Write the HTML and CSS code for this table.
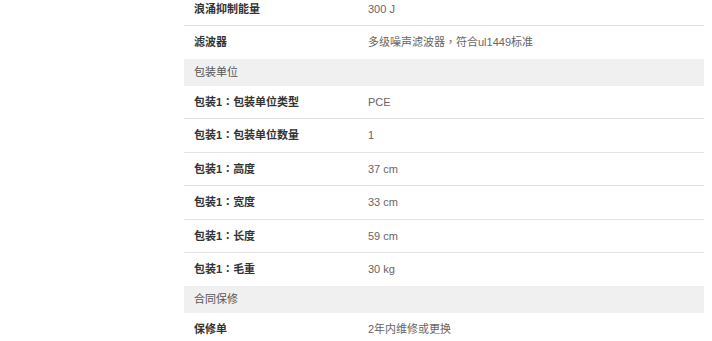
FILE: index.html
```html
<!DOCTYPE html>
<html lang="zh-CN">
<head>
<meta charset="utf-8">
<link rel="stylesheet" href="styles.css">
</head>
<body>
<div class="specs">
  <div class="row"><div class="label">浪涌抑制能量</div><div class="value">300 J</div></div>
  <div class="row last"><div class="label">滤波器</div><div class="value">多级噪声滤波器<span class="punct" lang="zh-TW">，</span>符合ul1449标准</div></div>
  <div class="section">包装单位</div>
  <div class="row"><div class="label">包装1<span class="punct" lang="zh-TW">：</span>包装单位类型</div><div class="value">PCE</div></div>
  <div class="row"><div class="label">包装1<span class="punct" lang="zh-TW">：</span>包装单位数量</div><div class="value">1</div></div>
  <div class="row"><div class="label">包装1<span class="punct" lang="zh-TW">：</span>高度</div><div class="value">37 cm</div></div>
  <div class="row"><div class="label">包装1<span class="punct" lang="zh-TW">：</span>宽度</div><div class="value">33 cm</div></div>
  <div class="row"><div class="label">包装1<span class="punct" lang="zh-TW">：</span>长度</div><div class="value">59 cm</div></div>
  <div class="row last"><div class="label">包装1<span class="punct" lang="zh-TW">：</span>毛重</div><div class="value">30 kg</div></div>
  <div class="section">合同保修</div>
  <div class="row last"><div class="label">保修单</div><div class="value">2年内维修或更换</div></div>
</div>
</body>
</html>
```

FILE: styles.css
```css
html, body {
  margin: 0;
  padding: 0;
  background: #ffffff;
}
body {
  font-family: "Liberation Sans", Arial, "Noto Sans CJK SC", sans-serif;
  font-size: 11px;
  line-height: 16.5px;
  overflow: hidden;
}
.specs {
  width: 520px;
  margin: -7.5px 0 0 184px;
  display: flex;
  flex-direction: column;
}
.row {
  display: grid;
  grid-template-columns: 174px 1fr;
  padding: 8px 0;
  border-bottom: 1px solid #e3e3e3;
}
.row.last {
  border-bottom: none;
}
.label,
.value {
  height: 16.5px;
  white-space: nowrap;
}
.label {
  padding-left: 10px;
  font-weight: bold;
  color: #333333;
}
.value {
  padding-left: 10px;
  color: #666666;
}
.punct {
  font-family: "Noto Sans CJK TC", sans-serif;
  line-height: 1;
}
.section {
  background: #f0f0f0;
  padding: 5px 10px 5.5px;
  color: #555555;
}
```
